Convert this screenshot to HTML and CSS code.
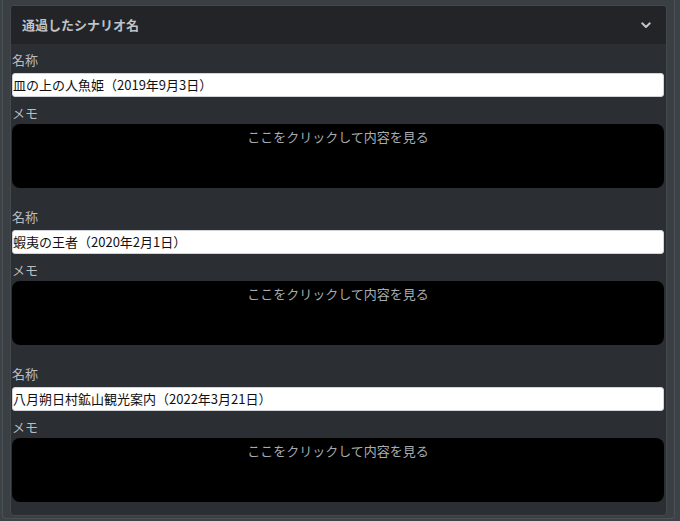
FILE: index.html
```html
<!DOCTYPE html>
<html lang="ja">
<head>
<meta charset="utf-8">
<title>通過したシナリオ名</title>
<link rel="stylesheet" href="styles.css">
</head>
<body>
<div class="panel">
  <section class="card">
    <header class="card-header">
      <h2 class="card-title">通過したシナリオ名</h2>
      <svg class="chevron" width="10" height="7" viewBox="0 0 10 7" aria-hidden="true"><path d="M1.2 1.3 L5 5 L8.8 1.3" fill="none" stroke="#c3c7cb" stroke-width="1.9" stroke-linecap="round" stroke-linejoin="round"/></svg>
    </header>
    <div class="card-body">
      <div class="group">
        <div class="label">名称</div>
        <div class="field">皿の上の人魚姫（2019年9月3日）</div>
        <div class="label memo-label">メモ</div>
        <div class="memo">ここをクリックして内容を見る</div>
      </div>
      <div class="group">
        <div class="label">名称</div>
        <div class="field">蝦夷の王者（2020年2月1日）</div>
        <div class="label memo-label">メモ</div>
        <div class="memo">ここをクリックして内容を見る</div>
      </div>
      <div class="group">
        <div class="label">名称</div>
        <div class="field">八月朔日村鉱山観光案内（2022年3月21日）</div>
        <div class="label memo-label">メモ</div>
        <div class="memo">ここをクリックして内容を見る</div>
      </div>
    </div>
  </section>
</div>
</body>
</html>
```
FILE: styles.css
```css
html, body {
  margin: 0;
  padding: 0;
}
body {
  background: #3d4247;
  width: 680px;
  height: 521px;
  overflow: hidden;
  font-family: "Noto Sans CJK JP", "Noto Sans", sans-serif;
  font-size: 13px;
}
.panel {
  box-sizing: border-box;
  margin-left: 2px;
  width: 673px;
  height: 519px;
  background: #3a3f44;
  border: 1px solid #4b5055;
  border-top: none;
  border-radius: 0 0 4px 4px;
  padding: 5px 7px 0 7px;
}
.card {
  background: #2b2e32;
  border: 1px solid #44494e;
  border-radius: 4px;
  overflow: hidden;
}
.card-header {
  height: 38px;
  background: #222428;
  display: flex;
  align-items: center;
  justify-content: space-between;
  padding: 0 15px 0 11px;
}
.card-title {
  margin: 0;
  font-size: 13px;
  font-weight: bold;
  color: #bfc3c7;
  line-height: 20px;
}
.chevron {
  display: block;
}
.card-body {
  padding: 0 2px 13px 1px;
}
.group {
  display: flex;
  flex-direction: column;
  margin-top: 19px;
}
.group:first-child {
  margin-top: 6px;
}
.label {
  line-height: 20px;
  height: 20px;
  color: #b9bdc1;
  margin-bottom: 3px;
}
.memo-label {
  margin-top: 6px;
  margin-bottom: 1px;
}
.field {
  box-sizing: border-box;
  height: 24px;
  background: #ffffff;
  border: 1px solid #d0d4d8;
  border-radius: 3px;
  padding: 0 4px 0 0;
  line-height: 22px;
  color: #111111;
  white-space: nowrap;
}
.memo {
  box-sizing: border-box;
  height: 64px;
  background: #000000;
  border-radius: 8px;
  padding-top: 3px;
  line-height: 20px;
  text-align: center;
  color: #a7acb1;
}
```
